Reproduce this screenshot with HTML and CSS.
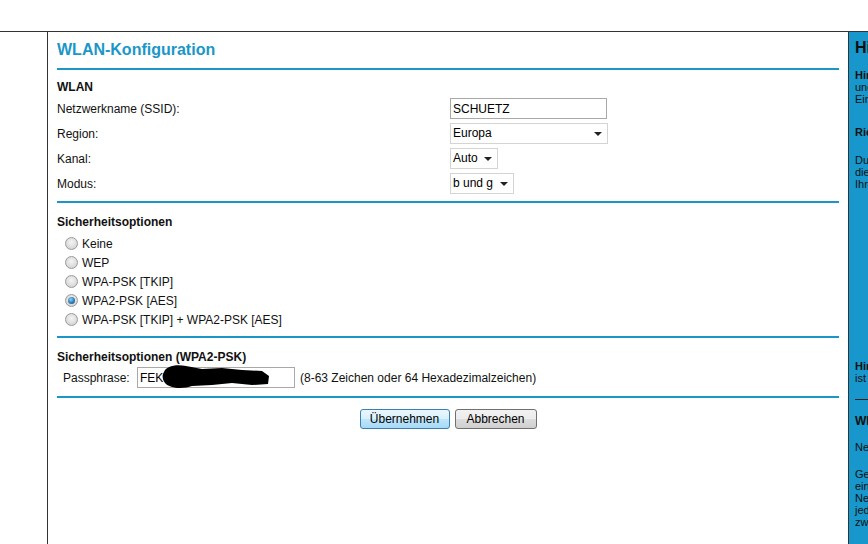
FILE: index.html
```html
<!DOCTYPE html>
<html lang="de">

<head>
    <meta charset="UTF-8">
    <title>WLAN-Konfiguration</title>
    <link rel="stylesheet" href="styles.css">
</head>

<body>
    <div class="frame">
        <div class="nav"></div>

        <div class="main">
            <h1 class="title">WLAN-Konfiguration</h1>

            <div class="section sec-wlan">
                <div class="sec-title">WLAN</div>
                <div class="row">
                    <span>Netzwerkname (SSID):</span>
                    <input class="text ssid" type="text" value="SCHUETZ">
                </div>
                <div class="row">
                    <span>Region:</span>
                    <span class="sel w-region">Europa</span>
                </div>
                <div class="row">
                    <span>Kanal:</span>
                    <span class="sel w-kanal">Auto</span>
                </div>
                <div class="row">
                    <span>Modus:</span>
                    <span class="sel w-modus">b und g</span>
                </div>
            </div>

            <div class="section sec-opts">
                <div class="sec-title">Sicherheitsoptionen</div>
                <ul class="radios">
                    <li><span class="radio"></span>Keine</li>
                    <li><span class="radio"></span>WEP</li>
                    <li><span class="radio"></span>WPA-PSK [TKIP]</li>
                    <li><span class="radio checked"></span>WPA2-PSK [AES]</li>
                    <li><span class="radio"></span>WPA-PSK [TKIP] + WPA2-PSK [AES]</li>
                </ul>
            </div>

            <div class="section sec-psk">
                <div class="sec-title">Sicherheitsoptionen (WPA2-PSK)</div>
                <div class="pass-row">
                    <span class="pass-label">Passphrase:</span>
                    <span class="pass-box">
                        <input class="text pass" type="text" value="FEK">
                        <!-- geschwärzter Teil -->
                        <svg class="blot" width="108" height="26" viewBox="0 0 108 26">
                            <path d="M2,8 C4,2 14,0 24,2 L40,5 L60,4 L80,6 L100,7 L107,12 L106,20 L90,21 L70,19 L50,21 L30,22 C22,25 8,25 3,19 C0,15 0,11 2,8 Z" fill="#000" />
                        </svg>
                    </span>
                    <span class="hint">(8-63 Zeichen oder 64 Hexadezimalzeichen)</span>
                </div>
            </div>

            <div class="buttons">
                <button class="btn btn-default">Übernehmen</button>
                <button class="btn btn-cancel">Abbrechen</button>
            </div>
        </div>

        <div class="help">
            <h2>Hilfe</h2>
            <p class="p1"><b>Hinweis:</b> Hier können Sie die WLAN-<br>und Sicherheitseinstellungen Ihres<br>Einstellungen vornehmen.</p>
            <p class="p2"><b>Richtlinien für die Konfiguration</b></p>
            <p class="p3">Durch die Eingabe der Daten werden<br>die Einstellungen für das Netzwerk<br>Ihres Routers festgelegt.</p>
            <p class="p4"><b>Hinweis:</b> Die Standardeinstellung<br>ist für die meisten Benutzer geeignet.</p>
            <hr>
            <h3>WLAN-Netzwerk</h3>
            <p class="p5">Netzwerkname (SSID)</p>
            <p class="p6">Geben Sie einen Namen mit bis zu 32<br>einfachen Zeichen ein. Alle Geräte im<br>Netzwerk müssen denselben Namen<br>jedes Geräts verwenden. Es wird<br>zwischen Groß- und Kleinschreibung</p>
        </div>
    </div>
</body>

</html>
```

FILE: styles.css
```css
* {
    margin: 0;
    padding: 0;
    box-sizing: border-box;
}

html,
body {
    height: 100%;
    overflow: hidden;
}

body {
    background: #fff;
    color: #111;
    font-family: "Liberation Sans", Arial, sans-serif;
    font-size: 12px;
}

.frame {
    display: flex;
    width: 1200px;
    height: 600px;
    margin-top: 31px;
    border-top: 1px solid #333;
}

.nav {
    flex: 0 0 48px;
    border-right: 1px solid #333;
}

.main {
    flex: 0 0 800px;
    padding: 0 9px;
}

/* Überschrift */
.title {
    height: 38px;
    padding-top: 8px;
    line-height: 20px;
    font-size: 16px;
    font-weight: bold;
    color: #1a96c8;
    border-bottom: 2px solid #1a96c8;
}

.section {
    border-bottom: 2px solid #1a96c8;
}

.sec-title {
    line-height: 18px;
    font-weight: bold;
}

.sec-wlan {
    padding: 8px 0 5px;
}

.row {
    display: grid;
    grid-template-columns: 393px auto;
    align-items: center;
    height: 25px;
}

.text {
    height: 21px;
    padding: 0 2px;
    border: 1px solid #a9a9a9;
    font-family: inherit;
    font-size: 12px;
    color: #000;
    outline: none;
}

.ssid {
    width: 157px;
}

/* Auswahllisten mit Pfeil */
.sel {
    position: relative;
    display: block;
    height: 21px;
    line-height: 19px;
    padding-left: 2px;
    border: 1px solid #d4d4d4;
    color: #000;
}

.sel::after {
    content: "";
    position: absolute;
    right: 5px;
    top: 8px;
    border-left: 4px solid transparent;
    border-right: 4px solid transparent;
    border-top: 4px solid #222;
}

.w-region {
    width: 158px;
}

.w-kanal {
    width: 48px;
}

.w-modus {
    width: 64px;
}

.sec-opts {
    padding: 10px 0 7px;
}

.radios {
    list-style: none;
    margin-top: 3px;
    padding-left: 8px;
}

.radios li {
    display: flex;
    align-items: center;
    height: 19px;
}

.radio {
    position: relative;
    width: 13px;
    height: 13px;
    margin-right: 4px;
    border: 1px solid #9a9a9a;
    border-radius: 50%;
    background: radial-gradient(circle at 50% 40%, #f4f4f4 0%, #dcdcdc 60%, #c8c8c8 100%);
}

.radio.checked::after {
    content: "";
    position: absolute;
    left: 2px;
    top: 2px;
    width: 7px;
    height: 7px;
    border-radius: 50%;
    background: radial-gradient(circle at 40% 35%, #8fd0f5 0%, #2b7bb5 55%, #1a4f80 100%);
}

.sec-psk {
    padding: 10px 0 7px;
}

.pass-row {
    display: flex;
    align-items: center;
    height: 23px;
    padding-left: 6px;
}

.pass-label {
    width: 74px;
}

.pass-box {
    position: relative;
    display: block;
}

.pass {
    display: block;
    width: 158px;
}

.blot {
    position: absolute;
    left: 25px;
    top: -3px;
}

.hint {
    margin-left: 5px;
}

/* Schaltflächen */
.buttons {
    display: flex;
    justify-content: center;
    gap: 5px;
    padding-top: 11px;
}

.btn {
    height: 20px;
    border-radius: 3px;
    font-family: inherit;
    font-size: 12px;
    color: #000;
}

.btn-default {
    width: 90px;
    border: 1px solid #3c7fb1;
    background: linear-gradient(#eaf6fd, #d9f0fc 50%, #bee6fd 51%, #a7d9f5);
}

.btn-cancel {
    width: 82px;
    border: 1px solid #707070;
    background: linear-gradient(#f2f2f2, #ebebeb 50%, #dddddd 51%, #cfcfcf);
}

/* Hilfe rechts */
.help {
    flex: 0 0 300px;
    padding: 6px 6px 0;
    border-left: 1px solid #333;
    background: #1797cc;
    color: #111;
    font-size: 11px;
    line-height: 12px;
    white-space: nowrap;
}

.help h2 {
    font-size: 16px;
    line-height: 20px;
    color: #111;
}

.help .p1 {
    margin-top: 11px;
}

.help .p2 {
    margin-top: 21px;
}

.help .p3 {
    margin-top: 16px;
}

.help .p4 {
    margin-top: 170px;
}

.help hr {
    margin-top: 15px;
    border: 0;
    border-top: 1px solid #222;
}

.help h3 {
    margin-top: 14px;
    font-size: 12px;
    line-height: 14px;
}

.help .p5 {
    margin-top: 13px;
}

.help .p6 {
    margin-top: 15px;
}
```
